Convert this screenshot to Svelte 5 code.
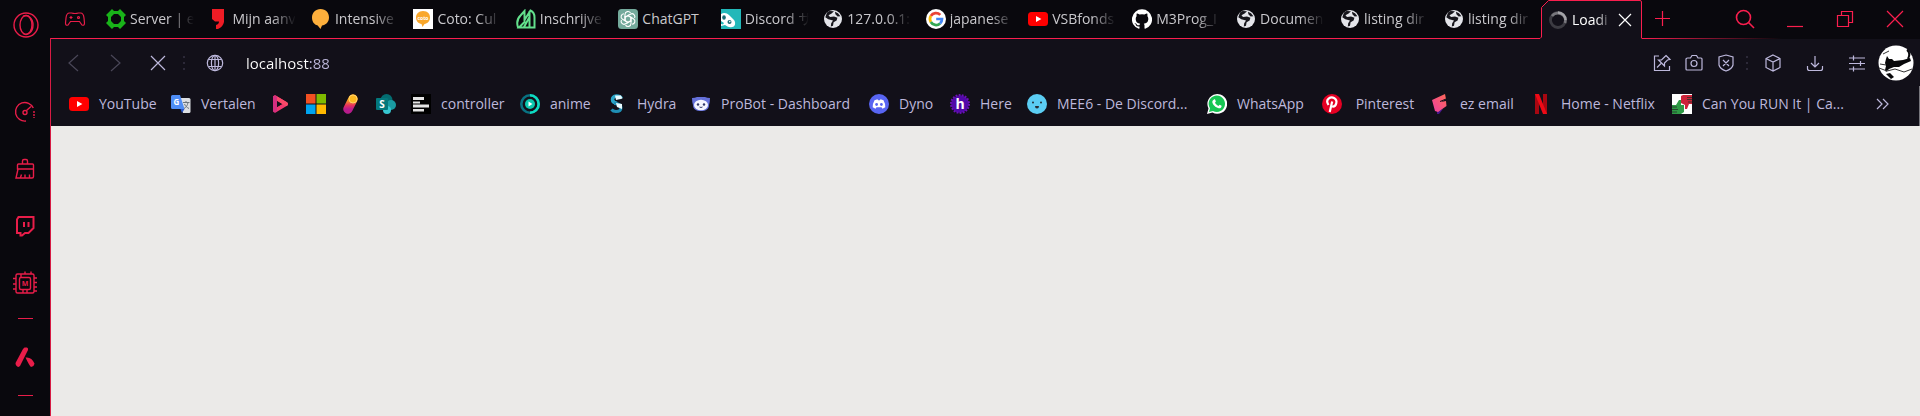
<script>
  const globe = `<circle cx="10" cy="10" r="9" fill="#e4e5ea"/><path d="M4 3.600 6.500 2 11 2.300 8.600 4.600 5.500 6.200 7 8l4-.6 3.400 1.400-.8 2.800-3 1.600-.6 3.600-2.200.6.4-3.200L10 11.600 5.300 10.300 2.300 8.300ZM12 2.800l3 1.400 2.400 3-2.800.2-2.200-2.200Z" fill="#17161c"/>`;
  const youtube = `<rect y="3" width="20" height="14" rx="3.500" fill="#f00"/><path d="m8 7 5.400 3L8 13Z" fill="#fff"/>`;

  const pictures = {
    globe,
    youtube,
    server: `<path fill-rule="evenodd" d="m6 0 2 2h4l2-2 6 6-2 2v4l2 2-6 6-2-2H8l-2 2-6-6 2-2V8L0 6ZM8 5 5 8v4l3 3h4l3-3V8l-3-3Z" fill="#19b319"/>`,
    mijn: `<path d="M4 0h12v13q-1 5-6 7H8v-4q3-1 3-3.500H7L4 10Z" fill="#ee1c25"/>`,
    balloon: `<path d="M9.500 0C15 0 18 4 18 8.500c0 5-3.500 7.500-7 8L9.500 20l-2.800-3.500C3 15.500 1 12.500 1 8.500 1 4 4.500 0 9.500 0Z" fill="#fdaf3c"/>`,
    coto: `<path d="M0 0h20v20H0Z" fill="#fff"/><path d="M10 2c5 0 7 3 7 6.500s-2.500 6-5.500 6.500L9.500 18l-1-3C5.500 14.500 3 12 3 8.500S5.500 2 10 2Z" fill="#f9a72b"/><text x="10" y="10.500" text-anchor="middle" font-family="Open Sans, sans-serif" font-size="5" font-weight="700" fill="#fff">coto</text>`,
    inschrijf: `<path d="M2 18.500C.500 14 1 10 4.500 6.500L8.500 2v11l-5.500 5.500h15.500V8.500C18.500 5 17 2.500 14.500 1.500L8.500 11M13.500 2v16M13.500 8 8 18" fill="none" stroke="#63e08c" stroke-width="2"/>`,
    chatgpt: `<rect width="20" height="20" rx="3.500" fill="#74aa9c"/><g fill="none" stroke="#fff" stroke-width="1.100">${[0, 60, 120, 180, 240, 300].map((a) => `<path transform="rotate(${a} 10 10)" d="M7 8.300V5.500c0-3.200 4-4 5.500-1.600M7 8.300l3-1.700 4 2.300"/>`).join('')}</g>`,
    discordpage: `<path d="M0 0h20v20H0Z" fill="#22b8b9"/><path d="M0 5c3-2 6-1 8 1l4 4c3 2 3 8-1 8-3 1-5-1-7-2l-4 1Z" fill="#fff"/><ellipse cx="3" cy="8.500" rx="1.800" ry="2.200" fill="#176c75"/><circle cx="8.500" cy="13" r="2" fill="#176c75"/><circle cx="8.800" cy="12.600" r=".8" fill="#fff"/><path d="m0 12 3 2-1 1.500-2-.5Z" fill="#22b8b9"/>`,
    google: `<circle cx="10" cy="10" r="10" fill="#fff"/><g fill="none" stroke-width="2.700"><path d="M14.300 5.900A6 6 0 0 0 4.800 7" stroke="#ea4335"/><path d="M4.800 7a6 6 0 0 0 0 6" stroke="#fbbc05"/><path d="M4.800 13a6 6 0 0 0 9.300 1.400" stroke="#34a853"/><path d="M14.100 14.400A6 6 0 0 0 16 10h-5.800" stroke="#4285f4"/></g>`,
    github: `<path fill="#fff" d="M10 .3a10 10 0 0 0-3.200 19.500c.5.100.7-.2.700-.5v-1.900c-2.800.6-3.400-1.200-3.400-1.200-.4-1.100-1.100-1.400-1.100-1.400-.9-.6.1-.6.1-.6 1 .1 1.500 1 1.500 1 .9 1.600 2.400 1.100 3 .9 0-.7.3-1.100.6-1.400-2.200-.2-4.500-1.100-4.500-4.900 0-1.100.4-2 1-2.700-.1-.2-.4-1.300.1-2.600 0 0 .8-.3 2.700 1a9.500 9.500 0 0 1 5 0c1.900-1.300 2.700-1 2.700-1 .5 1.300.2 2.400.1 2.600.6.7 1 1.600 1 2.700 0 3.800-2.300 4.700-4.500 4.900.4.300.7.900.7 1.900v2.700c0 .3.200.6.700.5A10 10 0 0 0 10 .3Z"/>`,
    loading: `<circle cx="10" cy="10" r="7.500" fill="none" stroke="#3c3b42" stroke-width="2.800"/><path d="M4 6a7.500 7.500 0 0 1 13 7" fill="none" stroke="#77767c" stroke-width="2.800"/><path d="M10 2.500a7.500 7.500 0 0 1 7.500 7.500" fill="none" stroke="#a5a4a9" stroke-width="2.400"/>`,
    translate: `<path d="M9 4h9a1.500 1.500 0 0 1 1.500 1.500v12A1.500 1.500 0 0 1 18 19h-6Z" fill="#dcdfe3"/><path d="M1.500 1H9l4.500 14h-12A1.500 1.500 0 0 1 0 13.500v-11A1.500 1.500 0 0 1 1.500 1Z" fill="#4e8df5"/><path d="M9.500 15h4L11 19Z" fill="#2a56c6"/><text x="5.500" y="11" text-anchor="middle" font-family="Open Sans, sans-serif" font-size="8" font-weight="700" fill="#fff">G</text><path d="M12 8.500h6.500M15 7v1.500M17 8.500c-.5 3-2 5-4 6M13.500 10c.8 2 2.500 3.500 4.500 4.500" fill="none" stroke="#68747c"/>`,
    play: `<path d="m4 3.500 11 6.500-11 6.500Z" fill="none" stroke="#f2386d" stroke-width="4" stroke-linejoin="round"/><path d="m4 3.500 11 6.500" fill="none" stroke="#fa4968" stroke-width="4" stroke-linecap="round"/><path d="M4 3.500v13" fill="none" stroke="#d52e80" stroke-width="4" stroke-linecap="round"/><path d="M6 7v6l5-3Z" fill="#121019"/>`,
    microsoft: `<path d="M0 0h9.500v9.500H0Z" fill="#f25022"/><path d="M10.500 0H20v9.500h-9.500Z" fill="#7fba00"/><path d="M0 10.500h9.500V20H0Z" fill="#00a4ef"/><path d="M10.500 10.500H20V20h-9.500Z" fill="#ffb900"/>`,
    pill: `<defs><linearGradient id="pill" x1="0" y1="1" x2="0" y2="0"><stop stop-color="#b81c8b"/><stop offset=".35" stop-color="#e6305f"/><stop offset=".9" stop-color="#f9a21c"/></linearGradient></defs><path d="M12 5 7 15" fill="none" stroke="url(#pill)" stroke-width="9.500" stroke-linecap="round"/><circle cx="12" cy="5" r="4" fill="#fcb81f" stroke="#ffd26a"/>`,
    sharepoint: `<circle cx="10.500" cy="6" r="6" fill="#036c70"/><circle cx="15" cy="11" r="5" fill="#1a9ba1"/><circle cx="11" cy="16" r="4" fill="#37c6d0"/><rect y="4" width="12" height="12" rx="1" fill="#03787c"/><text x="6" y="13.500" text-anchor="middle" font-family="Open Sans, sans-serif" font-size="10" font-weight="700" fill="#fff">S</text>`,
    controller: `<path d="M0 0h20v20H0Z" fill="#000"/><path d="M2 3h11v3H2ZM2 7.500h7v2H2ZM2 10.500h16v3H2ZM2 15h11v2.500H2Z" fill="#e4e4e4"/>`,
    anime: `<circle cx="10" cy="10" r="8.700" fill="none" stroke="#087181" stroke-width="2.600"/><path d="M10 1.300a8.700 8.700 0 0 1 0 17.400" fill="none" stroke="#0edbc0" stroke-width="2.600"/><circle cx="10" cy="10" r="5" fill="#0bc7ae"/><path d="m8.500 7.500 4 2.500-4 2.500Z" fill="#fff"/>`,
    hydra: `<path d="M14.500 4.500Q13 2 9.500 2 5.500 2.500 5.500 5.500T10 9.500" fill="none" stroke="#2aa6c9" stroke-width="3.500"/><path d="M7 9.500q7 0 7 4t-5 4q-3 0-4.500-2" fill="none" stroke="#1f8fb5" stroke-width="3"/><path d="M8 1.500h6l1.500 3L9 6ZM9 9l6 1v5l-5-2Z" fill="#e9fbff"/>`,
    probot: `<path d="M1 4q3 0 5-1h8q2 1 5 1 0 4-1 7c0 4-3 6-8 6s-8-2-8-6Q1 8 1 4Z" fill="#6470d9"/><ellipse cx="10" cy="11" rx="7" ry="5.200" fill="#f4f5ff"/><circle cx="7" cy="10.500" r="1.200" fill="#303769"/><circle cx="13" cy="10.500" r="1.200" fill="#303769"/><path d="M8.500 13q1.500 1 3 0" fill="none" stroke="#303769"/>`,
    dyno: `<circle cx="10" cy="10" r="10" fill="#5865f2"/><path d="M5.500 6.200 8.500 5.200l.6 1h1.800l.6-1 3 1q2 3.500 1.800 7l-2.800 1.500-1-1.400H7.500l-1 1.400-2.800-1.500q-.2-3.500 1.800-7Z" fill="#fff"/><circle cx="7.600" cy="10.500" r="1.400" fill="#5865f2"/><circle cx="12.400" cy="10.500" r="1.400" fill="#5865f2"/>`,
    here: `<circle cx="10" cy="10" r="8.800" fill="#5108a8"/><circle cx="10" cy="10" r="9" fill="none" stroke="#6a10b5" stroke-width="2" stroke-dasharray="1.800 1.340"/><text x="10" y="15" text-anchor="middle" font-family="Open Sans, sans-serif" font-size="14" font-weight="700" fill="#fff">h</text>`,
    mee6: `<circle cx="10" cy="10" r="10" fill="#5bcdf3"/><circle cx="6" cy="8.500" r="1" fill="#252b32"/><circle cx="14" cy="8.500" r="1" fill="#252b32"/><path d="M8 12h4q0 2.500-2 2.500T8 12Z" fill="#252b32"/>`,
    whatsapp: `<path d="M0 20 1.500 14.500A9.900 9.900 0 1 1 5.500 18.600Z" fill="#fff"/><path d="m2 18 1-3.700A8.200 8.200 0 1 1 6 17Z" fill="#17c653"/><path d="M7 5.500c.5-.3 1-.2 1.200.3l.7 1.700-.9 1.200c.8 1.500 1.800 2.400 3.400 3.200l1.200-1.200 2 1c0 2-1.500 2.800-3 2.500-3-.6-6-3.600-6.300-6.200 0-1 .8-2.100 1.700-2.500Z" fill="#fff"/>`,
    pinterest: `<circle cx="10" cy="10" r="10" fill="#e60023"/><path d="M6.500 11C2.500 5 9 2.500 12 4c4.500 2.500 2 9-1.500 8.500-1 0-1.500-.8-1.500-.8M10.200 7.500 7.700 18" fill="none" stroke="#fff" stroke-width="2.200"/>`,
    ez: `<defs><linearGradient id="ez" x1="0" y1="1" x2="1" y2="0"><stop stop-color="#ee3fa2"/><stop offset="1" stop-color="#ff6a55"/></linearGradient></defs><path d="m7 17 6-2-4 5H7Z" fill="#48188c"/><path d="M2 6 15 0l1 5-5 3 5-1 .5 5L8 18l-3-1Z" fill="url(#ez)"/><path d="m10 7.500 6-2.500" stroke="#121019"/>`,
    netflix: `<path d="M4 0h4v20H4ZM12 0h4v20h-4Z" fill="#a70711"/><path d="M4 0h4l8 20h-4Z" fill="#ee0a16"/>`,
    canrun: `<path d="M0 0h20v20H0Z" fill="#fff"/><path d="M9 2 11 1h9v9h-3l-2 5h-2v-4L9 9Z" fill="#cc2339"/><path d="M0 11h4l3-5h2v5h3v7l-3 2H0Z" fill="#2e9a45"/><path d="M15 3.500h5M15 5.500h5M16 8h4M0 13h5M0 15.500h6M0 18h5" stroke="#27332a" stroke-width=".8"/>`,
  };

  const line = {
    opera: `<circle cx="13" cy="13" r="12"/><ellipse cx="13" cy="13" rx="6" ry="9.500"/><path d="M10 4.500c5-3 10 2 10 8.500s-5 11.500-10 8.500"/>`,
    gauge: `<path d="M14 22a9.300 9.300 0 1 1 7.300-13M14.500 11.500l4.500-4"/><circle cx="13" cy="13.500" r="2"/><path d="M22 12v7" stroke-dasharray="2 1"/>`,
    broom: `<path d="M10.500 8.500V5q0-1.500 1.500-1.500h2q1.500 0 1.500 1.500v3.500M5.500 9q0-1 1-1h14q1 0 1 1v4h-16ZM6 13 4 22h16q1.500 0 1.500-1.500V13M8.500 21.500l1-3M13 21.500v-3M17.500 21.500v-3"/>`,
    twitch: `<path d="M5 6.500 6.500 4h15v11l-5 5H13l-3 2.500H8.500V20H5ZM12 9v5M16.500 9v5" stroke-width="2"/>`,
    chip: `<rect x="4" y="4" width="18" height="19" rx="1.500"/><rect x="7.500" y="7.500" width="11" height="12" rx="1.500"/><path d="M9 4v3.500M11 19.500V23M15 19.500V23M13 1.500V4M19 1.500V4M1 8.500h3M1 14h3M1 19h3M22 8h3M22 12.500h3M22 17h3M22 21h3"/><text x="13" y="16" text-anchor="middle" font-family="Open Sans, sans-serif" font-size="7" font-weight="700" fill="currentColor" stroke="none">M</text>`,
    aria: `<path d="M12.500 3.500h2.500q1.500.500 1 2.500L8 22l-1.500 1Q3.500 22 3.500 19L11 5ZM13.500 13.500q6-1 9 6-.5 3-3.500 3.500-1.500-1-5.500-9.500Z" fill="currentColor" stroke="none"/>`,
    pad: `<path d="M7.500 7h2q3.500 1 7 0h2q3 0 3.500 5l.5 5q0 3-2.500 2l-2.500-3.500h-9L6 19q-2.500 1-2.500-2l.5-5q.5-5 3.500-5Z"/><path d="M7.500 11.500h3M9 10v3"/><circle cx="16.500" cy="11.500" r="1"/>`,
    plus: `<path d="M13.500 6v15M6 13.500h15"/>`,
    search: `<circle cx="11.500" cy="11.500" r="7"/><path d="m16.500 16.500 5.500 5.500"/>`,
    minimise: `<path d="M5 20.500h16"/>`,
    restore: `<path d="M5.500 9.500h11v11h-11ZM9.500 9.500v-4h11v11h-4"/>`,
    close: `<path d="m5 5 16 16M21 5 5 21"/>`,
    back: `<path d="m17 5-9 8 9 8"/>`,
    forward: `<path d="m8 5 9 8-9 8"/>`,
    stop: `<path d="m6 6 14 14M20 6 6 20"/>`,
    small: `<path d="m7 7 12 12M19 7 7 19"/>`,
    site: `<circle cx="13" cy="13" r="7.700"/><ellipse cx="13" cy="13" rx="3.600" ry="7.700"/><path d="M6.500 9.500h13M6.500 16.500h13M13 5.500v15"/>`,
    pin: `<path d="M10 6H5.500v14.500h15V16M17 5.500l4 4-2.500.5-3 3v3l-6-6h3l3-3ZM12 13.500l-4 4"/>`,
    camera: `<path d="M6.500 8h3l1.500-2.500h4.500L17 8h3q1 0 1 1v10q0 1-1 1H6q-1 0-1-1V9q0-1 1.500-1Z"/><circle cx="13" cy="13.500" r="3"/>`,
    shield: `<path d="m13 5 7 2v8q-1 4-7 6-6-2-7-6V7ZM10 10l6 6M16 10l-6 6"/>`,
    cube: `<path d="m13 5 7 3.500v9L13 21l-7-3.500v-9ZM6 8.500l7 3.500 7-3.500M13 12v9"/>`,
    download: `<path d="M13 6v11M9 13l4 4 4-4M5.500 16v2.500q0 2 2 2h11q2 0 2-2V16"/>`,
    sliders: `<path d="M5 8h16M5 13.500h16M5 19h16M9.500 5.500v5M16.500 11v5M9.500 16.500v5"/>`,
    more: `<path d="m8 8 5 5-5 5M14 8l5 5-5 5"/>`,
  };

  const tabs = [
    ['server', 'Server | e'],
    ['mijn', 'Mijn aanv'],
    ['balloon', 'Intensive'],
    ['coto', 'Coto: Cul'],
    ['inschrijf', 'Inschrijve'],
    ['chatgpt', 'ChatGPT', true],
    ['discordpage', 'Discord サ'],
    ['globe', '127.0.0.1:'],
    ['google', 'japanese'],
    ['youtube', 'VSBfonds'],
    ['github', 'M3Prog_I'],
    ['globe', 'Documen'],
    ['globe', 'listing dir'],
    ['globe', 'listing dir'],
  ];

  const bookmarks = [
    ['youtube', 'YouTube'],
    ['translate', 'Vertalen'],
    ['play', ''],
    ['microsoft', ''],
    ['pill', ''],
    ['sharepoint', ''],
    ['controller', 'controller'],
    ['anime', 'anime'],
    ['hydra', 'Hydra'],
    ['probot', 'ProBot - Dashboard'],
    ['dyno', 'Dyno'],
    ['here', 'Here'],
    ['mee6', 'MEE6 - De Discord...'],
    ['whatsapp', 'WhatsApp'],
    ['pinterest', '\u00a0Pinterest'],
    ['ez', 'ez email'],
    ['netflix', 'Home - Netflix'],
    ['canrun', 'Can You RUN It | Ca...'],
  ];
</script>

{#snippet glyph(name)}
  <svg class="glyph" viewBox="0 0 26 26" aria-hidden="true">{@html line[name]}</svg>
{/snippet}

{#snippet picture(name)}
  <svg class="picture" viewBox="0 0 20 20" aria-hidden="true">{@html pictures[name]}</svg>
{/snippet}

<div class="browser">
  <aside class="sidebar">
    <button class="logo" aria-label="Menu">{@render glyph('opera')}</button>
    <nav class="panels" aria-label="Sidebar">
      <button aria-label="GX Control">{@render glyph('gauge')}</button>
      <button aria-label="GX Cleaner">{@render glyph('broom')}</button>
      <button aria-label="Twitch">{@render glyph('twitch')}</button>
      <button aria-label="Mods">{@render glyph('chip')}</button>
      <hr />
      <button class="tall" aria-label="Aria">{@render glyph('aria')}</button>
      <hr />
    </nav>
  </aside>

  <div class="window">
    <header class="tabbar">
      <button class="corner" aria-label="GX Corner">{@render glyph('pad')}</button>
      <div class="tabs">
        {#each tabs as [icon, title, fits]}
          <button class="tab">
            {@render picture(icon)}
            <span class="title" class:fits>{title}</span>
          </button>
        {/each}
      </div>
      <div class="active">
        <svg class="outline" viewBox="0 0 102 39" preserveAspectRatio="none" aria-hidden="true">
          <path d="M0 39V38.500L1.500 37V7.500L8.500.500H101V39Z" fill="#121019" />
          <path d="M0 38.500 1.500 37V7.500L8.500.500H100Q101.500.500 101.500 2V38.500" fill="none" stroke="#fa1e4e" />
        </svg>
        {@render picture('loading')}
        <span class="title">Loadi</span>
        <button class="shut" aria-label="Close tab">{@render glyph('small')}</button>
      </div>
      <div class="tools">
        <button class="new" aria-label="New tab">{@render glyph('plus')}</button>
        <button class="heavy" aria-label="Search tabs">{@render glyph('search')}</button>
        <button aria-label="Minimise">{@render glyph('minimise')}</button>
        <button aria-label="Restore">{@render glyph('restore')}</button>
        <button aria-label="Close">{@render glyph('close')}</button>
      </div>
    </header>

    <div class="toolbar">
      <button class="dim" aria-label="Back">{@render glyph('back')}</button>
      <button class="dim" aria-label="Forward">{@render glyph('forward')}</button>
      <button aria-label="Stop">{@render glyph('stop')}</button>
      <i class="dots"></i>
      <button class="site" aria-label="Site information">{@render glyph('site')}</button>
      <input class="address" type="text" aria-label="Address" value="localhost:88" spellcheck="false" />
      <button class="narrow" aria-label="Edit pin">{@render glyph('pin')}</button>
      <button class="narrow" aria-label="Snapshot">{@render glyph('camera')}</button>
      <button class="narrow" aria-label="Ad blocker">{@render glyph('shield')}</button>
      <i class="dots"></i>
      <button aria-label="Extensions">{@render glyph('cube')}</button>
      <button aria-label="Downloads">{@render glyph('download')}</button>
      <button aria-label="Easy setup">{@render glyph('sliders')}</button>
      <button class="avatar" aria-label="Profile">
        <svg viewBox="0 0 36 36" aria-hidden="true">
          <circle cx="18" cy="18" r="17.500" fill="#fff" />
          <path d="M8 14 9 11l2 3h3l2 2 9-1 7-2 1 3-7 3-5 3h-5l-5 2-3 3-1-2 1-4-1-3Z" fill="#08080a" />
          <path d="M30 14q3-6-1-9" fill="none" stroke="#08080a" stroke-width="2" />
          <path d="M1 23l8 3 8-2 9 3 8-3M5 9l6-3M2 19l6 1" fill="none" stroke="#333" />
          <path d="m8 29 4-1 4 4-3 2Z" fill="#08080a" />
        </svg>
      </button>
    </div>

    <nav class="bookmarks" aria-label="Bookmarks">
      {#each bookmarks as [icon, title]}
        <a href="#{icon}" aria-label={title || icon}>
          {@render picture(icon)}
          {#if title}<span>{title}</span>{/if}
        </a>
      {/each}
      <button class="overflow" aria-label="More bookmarks">{@render glyph('more')}</button>
    </nav>

    <main class="page"></main>
  </div>
</div>

<style>
  :global(body) {
    margin: 0;
    background: #09080d;
  }

  .browser {
    --accent: #fa1e4e;
    --panel: #121019;
    --lilac: #bdb8dc;
    display: flex;
    min-height: 100vh;
    background: #09080d;
    color: #c9c8cc;
    font: 14px/20px 'Open Sans', 'Noto Sans CJK JP', sans-serif;
  }

  button {
    display: flex;
    flex: none;
    align-items: center;
    justify-content: center;
    padding: 0;
    border: 0;
    background: none;
    color: inherit;
    font: inherit;
  }

  .glyph {
    display: block;
    flex: none;
    width: 26px;
    height: 26px;
    fill: none;
    stroke: currentColor;
    stroke-width: 1.2;
  }

  .picture {
    display: block;
    flex: none;
    width: 20px;
    height: 20px;
  }

  .sidebar {
    display: flex;
    flex: none;
    flex-direction: column;
    width: 51px;
    color: #e81d49;
  }

  .logo {
    height: 38px;
    padding-top: 12px;
  }

  .sidebar .glyph {
    stroke-width: 1.4;
  }

  .panels {
    flex: 1;
    box-sizing: border-box;
    padding-top: 45px;
    border-right: 1px solid #d71b44;
  }

  .panels button {
    width: 100%;
    height: 57px;
  }

  .panels .tall {
    height: 62px;
  }

  .panels hr {
    width: 15px;
    height: 1px;
    margin: 7px auto;
    border: 0;
    background: #e81d49;
  }

  .window {
    display: flex;
    flex: 1;
    flex-direction: column;
    min-width: 0;
  }

  .tabbar {
    display: flex;
    height: 39px;
  }

  .corner,
  .tabs {
    border-bottom: 1px solid var(--accent);
  }

  .corner {
    width: 47px;
    color: #e81d49;
  }

  .tabs {
    display: grid;
    flex: 1;
    grid-template-columns: repeat(9, minmax(0, 205fr)) repeat(5, minmax(0, 208fr));
    min-width: 0;
  }

  .tab {
    justify-content: flex-start;
    gap: 4px;
    min-width: 0;
    padding: 0 4px 0 8px;
  }

  .title {
    flex: 1;
    min-width: 0;
    overflow: hidden;
    text-align: left;
    white-space: nowrap;
    mask-image: linear-gradient(90deg, #000 40px, transparent 64px);
  }

  .title.fits {
    mask-image: none;
  }

  .active {
    position: relative;
    display: flex;
    flex: none;
    gap: 4px;
    align-items: center;
    box-sizing: border-box;
    width: 102px;
    padding: 0 4px 0 8px;
    color: #fff;
  }

  .active .title {
    mask-image: linear-gradient(90deg, #000 24px, transparent 40px);
  }

  .active > * {
    position: relative;
  }

  .active .outline {
    position: absolute;
    inset: 0;
    width: 100%;
    height: 100%;
  }

  .active .shut {
    width: 26px;
  }

  .tools {
    display: flex;
    color: var(--accent);
    background: linear-gradient(90deg, var(--accent), transparent 140px) bottom / 100% 1px no-repeat;
  }

  .tools button {
    width: 50px;
    height: 38px;
  }

  .tools .new {
    width: 40px;
    height: 36px;
    margin-right: 38px;
  }

  .heavy .glyph {
    stroke-width: 1.6;
  }

  .toolbar {
    display: flex;
    align-items: center;
    height: 47px;
    padding: 0 6px 0 2px;
    background: var(--panel);
    color: var(--lilac);
  }

  .toolbar button {
    width: 42px;
    height: 40px;
  }

  .toolbar .dim {
    color: #4a4758;
  }

  .dots {
    flex: none;
    width: 2px;
    height: 14px;
    margin: 0 4px;
    background: repeating-linear-gradient(#2c2938 0 2px, transparent 2px 6px);
  }

  .toolbar .site {
    width: 52px;
  }

  .address {
    flex: 1;
    min-width: 0;
    padding: 0 5px;
    border: 0;
    outline: 0;
    background: linear-gradient(90deg, #fff 69px, var(--lilac) 69px);
    background-clip: text;
    color: transparent;
    font: 15px/24px 'Open Sans', sans-serif;
  }

  .toolbar .narrow {
    width: 32px;
  }

  .toolbar .avatar {
    width: 36px;
    height: 36px;
  }

  .avatar svg {
    width: 36px;
    height: 36px;
  }

  .bookmarks {
    display: grid;
    grid-template-columns: 102px 100px 35px 35px 35px 35px 109px 87px 84px 178px 81px 77px 180px 115px 108px 101px 141px 1fr 76px;
    align-items: center;
    box-sizing: border-box;
    height: 40px;
    padding: 0 0 4px 18px;
    background: var(--panel);
    box-shadow: inset -1px 0 #77767c;
    color: var(--lilac);
    white-space: nowrap;
  }

  .bookmarks a {
    display: flex;
    gap: 10px;
    align-items: center;
    min-width: 0;
    color: inherit;
    text-decoration: none;
  }

  .page {
    flex: 1;
    background: #ebeae8;
  }
</style>
